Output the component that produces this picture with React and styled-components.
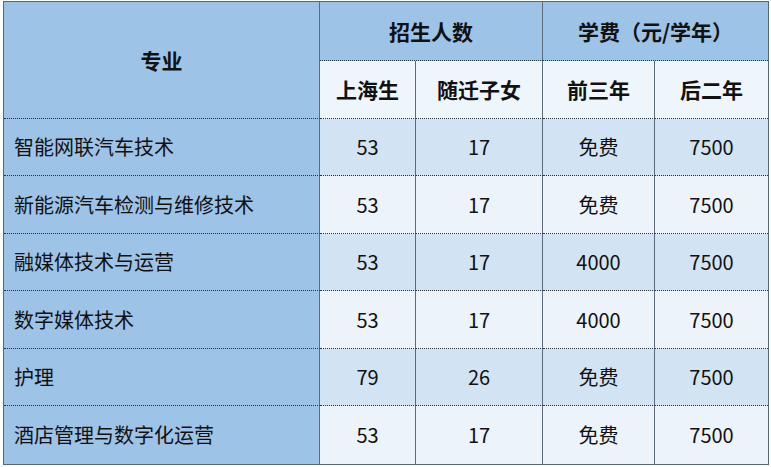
import React from "react";
import styled, { createGlobalStyle } from "styled-components";

const GlobalStyle = createGlobalStyle`
  html, body { margin: 0; padding: 0; background: #ffffff; }
  body { font-family: "Noto Sans CJK SC", "Microsoft YaHei", sans-serif; }
`;

const Page = styled.div`
  padding: 1px 4px 0 3px;
`;

const Table = styled.table`
  width: 764px;
  table-layout: fixed;
  border-collapse: separate;
  border-spacing: 0;
  border: 1.5px solid #52677c;
  font-family: "Noto Sans CJK SC", "Microsoft YaHei", sans-serif;
  color: #111;
`;

const Row = styled.tr`
  height: ${(p) => p.$h}px;
`;

const HeadCell = styled.th`
  background: ${(p) => (p.$light ? "#eef5fb" : "#9dc3e7")};
  font-size: 21px;
  font-weight: 700;
  text-align: center;
  vertical-align: middle;
  padding: 0;
  border-right: ${(p) => (p.$last ? "none" : "1px solid #5b6b7c")};
  border-bottom: 1px dotted #2b3440;
`;

const NameCell = styled.td`
  background: #9dc3e7;
  font-size: 20px;
  text-align: left;
  padding: 0 0 0 10px;
  border-right: 1px solid #5b6b7c;
  border-bottom: ${(p) => (p.$lastRow ? "none" : "1px dotted #2b3440")};
`;

const DataCell = styled.td`
  background: ${(p) => (p.$odd ? "#d2e4f4" : "#ecf3fa")};
  font-size: 20px;
  text-align: center;
  padding: 0;
  border-right: ${(p) => (p.$last ? "none" : "1px solid #5b6b7c")};
  border-bottom: ${(p) => (p.$lastRow ? "none" : "1px dotted #2b3440")};
`;

const rows = [
  ["智能网联汽车技术", "53", "17", "免费", "7500"],
  ["新能源汽车检测与维修技术", "53", "17", "免费", "7500"],
  ["融媒体技术与运营", "53", "17", "4000", "7500"],
  ["数字媒体技术", "53", "17", "4000", "7500"],
  ["护理", "79", "26", "免费", "7500"],
  ["酒店管理与数字化运营", "53", "17", "免费", "7500"],
];

export default function App() {
  return (
    <Page>
      <GlobalStyle />
      <Table>
        <colgroup>
          <col style={{ width: 316 }} />
          <col style={{ width: 96 }} />
          <col style={{ width: 127 }} />
          <col style={{ width: 112 }} />
          <col style={{ width: 113 }} />
        </colgroup>
        <thead>
          <Row $h={59}>
            <HeadCell rowSpan={2}>专业</HeadCell>
            <HeadCell colSpan={2}>招生人数</HeadCell>
            <HeadCell colSpan={2} $last>
              学费（元/学年）
            </HeadCell>
          </Row>
          <Row $h={57.5}>
            <HeadCell $light>上海生</HeadCell>
            <HeadCell $light>随迁子女</HeadCell>
            <HeadCell $light>前三年</HeadCell>
            <HeadCell $light $last>
              后二年
            </HeadCell>
          </Row>
        </thead>
        <tbody>
          {rows.map((r, i) => {
            const odd = i % 2 === 0;
            const lastRow = i === rows.length - 1;
            return (
              <Row $h={57.5} key={r[0]}>
                <NameCell $lastRow={lastRow}>{r[0]}</NameCell>
                {r.slice(1).map((v, j) => (
                  <DataCell key={j} $odd={odd} $lastRow={lastRow} $last={j === 3}>
                    {v}
                  </DataCell>
                ))}
              </Row>
            );
          })}
        </tbody>
      </Table>
    </Page>
  );
}
